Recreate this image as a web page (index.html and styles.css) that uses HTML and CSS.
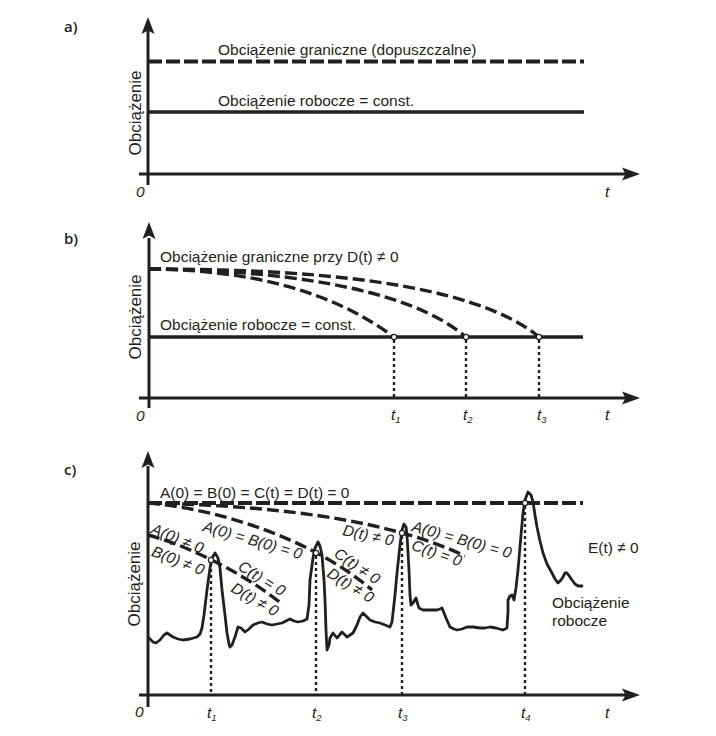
FILE: index.html
```html
<!DOCTYPE html>
<html lang="pl">
<head>
<meta charset="utf-8">
<title>Obciążenie</title>
<link rel="stylesheet" href="styles.css">
</head>
<body>
<main class="figure">
  <section class="panel">
    <svg class="chart" width="716" height="215" viewBox="0 0 716 215">
      <text class="tag" x="64" y="32">a)</text>
      <text class="ylbl" transform="translate(140.5,113) rotate(-90)">Obciążenie</text>
      <text class="lbl" x="218" y="55">Obciążenie graniczne (dopuszczalne)</text>
      <text class="lbl" x="218" y="106">Obciążenie robocze = const.</text>
      <line class="dash-line" x1="148" y1="61.5" x2="584" y2="61.5"/>
      <line class="solid" x1="148" y1="112" x2="584" y2="112"/>
      <line class="axis" x1="148" y1="30" x2="148" y2="185"/>
      <line class="axis" x1="139" y1="174" x2="628" y2="174"/>
      <path class="head" d="M148,17 L154.5,34 L148,30.5 L141.5,34 Z"/>
      <path class="head" d="M640,174 L622,167.5 L625.5,174 L622,180.5 Z"/>
      <text class="num" x="136" y="197">0</text>
      <text class="num" x="605" y="197">t</text>
    </svg>
  </section>
  <section class="panel">
    <svg class="chart" width="716" height="225" viewBox="0 215 716 225">
      <text class="tag" x="64" y="244">b)</text>
      <text class="ylbl" transform="translate(140.5,317) rotate(-90)">Obciążenie</text>
      <text class="lbl" x="160" y="262">Obciążenie graniczne przy D(t) ≠ 0</text>
      <text class="lbl" x="160" y="330">Obciążenie robocze = const.</text>
      <path class="dash-curve" d="M149,269 C250,270 330,290 394,337"/>
      <path class="dash-curve" d="M149,269 C270,270 405,285 466,337"/>
      <path class="dash-curve" d="M149,269 C300,269 470,280 539,337"/>
      <line class="solid" x1="149" y1="337" x2="583" y2="337"/>
      <line class="dots" x1="394" y1="340" x2="394" y2="397"/>
      <line class="dots" x1="466" y1="340" x2="466" y2="397"/>
      <line class="dots" x1="539" y1="340" x2="539" y2="397"/>
      <circle class="pt" cx="394" cy="337" r="2.6"/>
      <circle class="pt" cx="466" cy="337" r="2.6"/>
      <circle class="pt" cx="539" cy="337" r="2.6"/>
      <line class="axis" x1="149" y1="238" x2="149" y2="408"/>
      <line class="axis" x1="139" y1="398" x2="628" y2="398"/>
      <path class="head" d="M149,222 L155.5,239 L149,235.5 L142.5,239 Z"/>
      <path class="head" d="M640,398 L622,391.5 L625.5,398 L622,404.5 Z"/>
      <text class="num" x="136" y="421">0</text>
      <text class="num" x="391" y="420">t<tspan class="sub" dy="3">1</tspan></text>
      <text class="num" x="463" y="420">t<tspan class="sub" dy="3">2</tspan></text>
      <text class="num" x="537" y="420">t<tspan class="sub" dy="3">3</tspan></text>
      <text class="num" x="605" y="420">t</text>
    </svg>
  </section>
  <section class="panel">
    <svg class="chart" width="716" height="296" viewBox="0 440 716 296">
      <text class="tag" x="64" y="475">c)</text>
      <text class="ylbl" transform="translate(140,584) rotate(-90)">Obciążenie</text>
      <text class="lbl" x="160" y="498">A(0) = B(0) = C(t) = D(t) = 0</text>
      <line class="dash-line" x1="148" y1="503" x2="583" y2="503"/>
      <path class="dash-curve" d="M148,503 C230,510 320,545 372,590"/>
      <path class="dash-curve" d="M148,503 C300,506 400,525 465,556"/>
      <path class="dash-curve" d="M148,535 C180,543 240,570 282,604"/>

      <text class="rlbl" transform="translate(150,533) rotate(22)">A(0) ≠ 0</text>
      <text class="rlbl" transform="translate(150.5,555.5) rotate(21)">B(0) ≠ 0</text>
      <text class="rlbl" transform="translate(237,569) rotate(32)">C(t) = 0</text>
      <text class="rlbl" transform="translate(230,591) rotate(30)">D(t) ≠ 0</text>
      <text class="rlbl" transform="translate(202,531) rotate(16)">A(0) = B(0) = 0</text>
      <text class="rlbl" transform="translate(333,556) rotate(34)">C(t) ≠ 0</text>
      <text class="rlbl" transform="translate(326,576) rotate(32)">D(t) ≠ 0</text>
      <text class="rlbl" transform="translate(342,535) rotate(12)">D(t) ≠ 0</text>
      <text class="rlbl" transform="translate(411,531) rotate(15.5)">A(0) = B(0) = 0</text>
      <text class="rlbl" transform="translate(410.5,549.5) rotate(19)">C(t) = 0</text>

      <text class="lbl" x="588" y="553">E(t) ≠ 0</text>
      <text class="lbl" x="552" y="608">Obciążenie</text>
      <text class="lbl" x="552" y="626">robocze</text>

      <line class="dots" x1="211" y1="563" x2="211" y2="694"/>
      <line class="dots" x1="316" y1="556" x2="316" y2="694"/>
      <line class="dots" x1="402" y1="536" x2="402" y2="694"/>
      <line class="dots" x1="525" y1="506" x2="525" y2="694"/>

      <polyline class="load" points="149,638 153,642 156,643 160,640 164,635 167,633 170,635 173,637 178,639 183,640 190,639 197,637 200,634 202,628 204,615 207,590 210,568 212,558 215,553 218,558 220,568 222,590 225,615 227,633 229,644 230,647 232,645 235,637 238,627 241,628 245,632 249,629 253,625 258,623 262,622 267,624 272,625 277,624 282,623 286,621 290,619 294,621 298,622 303,621 307,619 309,605 310,580 313,558 315,548 318,542 320,546 322,555 324,580 325,600 326,630 327,650 329,645 330,638 333,633 337,638 342,632 347,637 353,633 357,625 360,617 363,613 366,616 370,620 375,622 380,623 385,625 390,627 392,622 393,613 395,595 397,573 400,545 402,530 404,524 406,527 407,535 409,570 410,595 411,605 413,603 416,598 418,605 419,608 423,610 427,610 432,610 437,610 440,609 442,608 446,618 450,627 454,629 457,630 462,629 467,627 473,627 480,628 485,628 490,627 496,628 503,630 507,628 508,612 508,600 510,596 512,595 514,600 516,588 518,570 521,535 523,513 525,500 528,492 531,495 533,502 535,515 537,527 540,541 543,553 547,564 552,573 555,579 558,583 561,580 563,577 565,573 567,573 570,577 572,580 575,584 578,586 582,586"/>

      <circle class="pt" cx="211" cy="560" r="2.6"/>
      <circle class="pt" cx="316" cy="553" r="2.6"/>
      <circle class="pt" cx="402" cy="533" r="2.6"/>
      <circle class="pt" cx="525" cy="503" r="2.6"/>

      <line class="axis" x1="148" y1="466" x2="148" y2="707"/>
      <line class="axis" x1="139" y1="695" x2="628" y2="695"/>
      <path class="head" d="M148,451 L154.5,468 L148,464.5 L141.5,468 Z"/>
      <path class="head" d="M640,695 L622,688.5 L625.5,695 L622,701.5 Z"/>
      <text class="num" x="135" y="717">0</text>
      <text class="num" x="207" y="718">t<tspan class="sub" dy="3">1</tspan></text>
      <text class="num" x="312" y="718">t<tspan class="sub" dy="3">2</tspan></text>
      <text class="num" x="398" y="718">t<tspan class="sub" dy="3">3</tspan></text>
      <text class="num" x="521" y="718">t<tspan class="sub" dy="3">4</tspan></text>
      <text class="num" x="605" y="718">t</text>
    </svg>
  </section>
</main>
</body>
</html>
```

FILE: styles.css
```css
html, body {
  margin: 0;
  padding: 0;
  background: #ffffff;
}

.figure {
  display: flex;
  flex-direction: column;
  width: 716px;
}

.panel {
  display: block;
}

.chart {
  display: block;
}

.chart text {
  fill: #231f20;
}

.tag {
  font-family: "Open Sans", "Noto Sans", sans-serif;
  font-weight: 600;
  font-size: 15px;
}

.lbl {
  font-family: "Liberation Sans", Arial, sans-serif;
  font-size: 15.5px;
}

.rlbl {
  font-family: "Liberation Sans", Arial, sans-serif;
  font-style: italic;
  font-size: 15.5px;
}

.ylbl {
  font-family: "Liberation Sans", Arial, sans-serif;
  font-size: 17px;
  text-anchor: middle;
}

.num {
  font-family: "Liberation Sans", Arial, sans-serif;
  font-style: italic;
  font-size: 15.5px;
}

.sub {
  font-size: 9.5px;
}

.axis {
  stroke: #231f20;
  stroke-width: 3;
  fill: none;
}

.head {
  fill: #231f20;
  stroke: none;
}

.solid {
  stroke: #231f20;
  stroke-width: 3.6;
  fill: none;
}

.dash-line {
  stroke: #231f20;
  stroke-width: 4;
  stroke-dasharray: 14 4;
  fill: none;
}

.dash-curve {
  stroke: #231f20;
  stroke-width: 3.4;
  stroke-dasharray: 12 5;
  fill: none;
}

.dots {
  stroke: #231f20;
  stroke-width: 2.4;
  stroke-dasharray: 3 3;
  fill: none;
}

.load {
  stroke: #231f20;
  stroke-width: 2.8;
  stroke-linejoin: round;
  stroke-linecap: round;
  fill: none;
}

.pt {
  fill: #ffffff;
  stroke: #231f20;
  stroke-width: 1.2;
}
```
